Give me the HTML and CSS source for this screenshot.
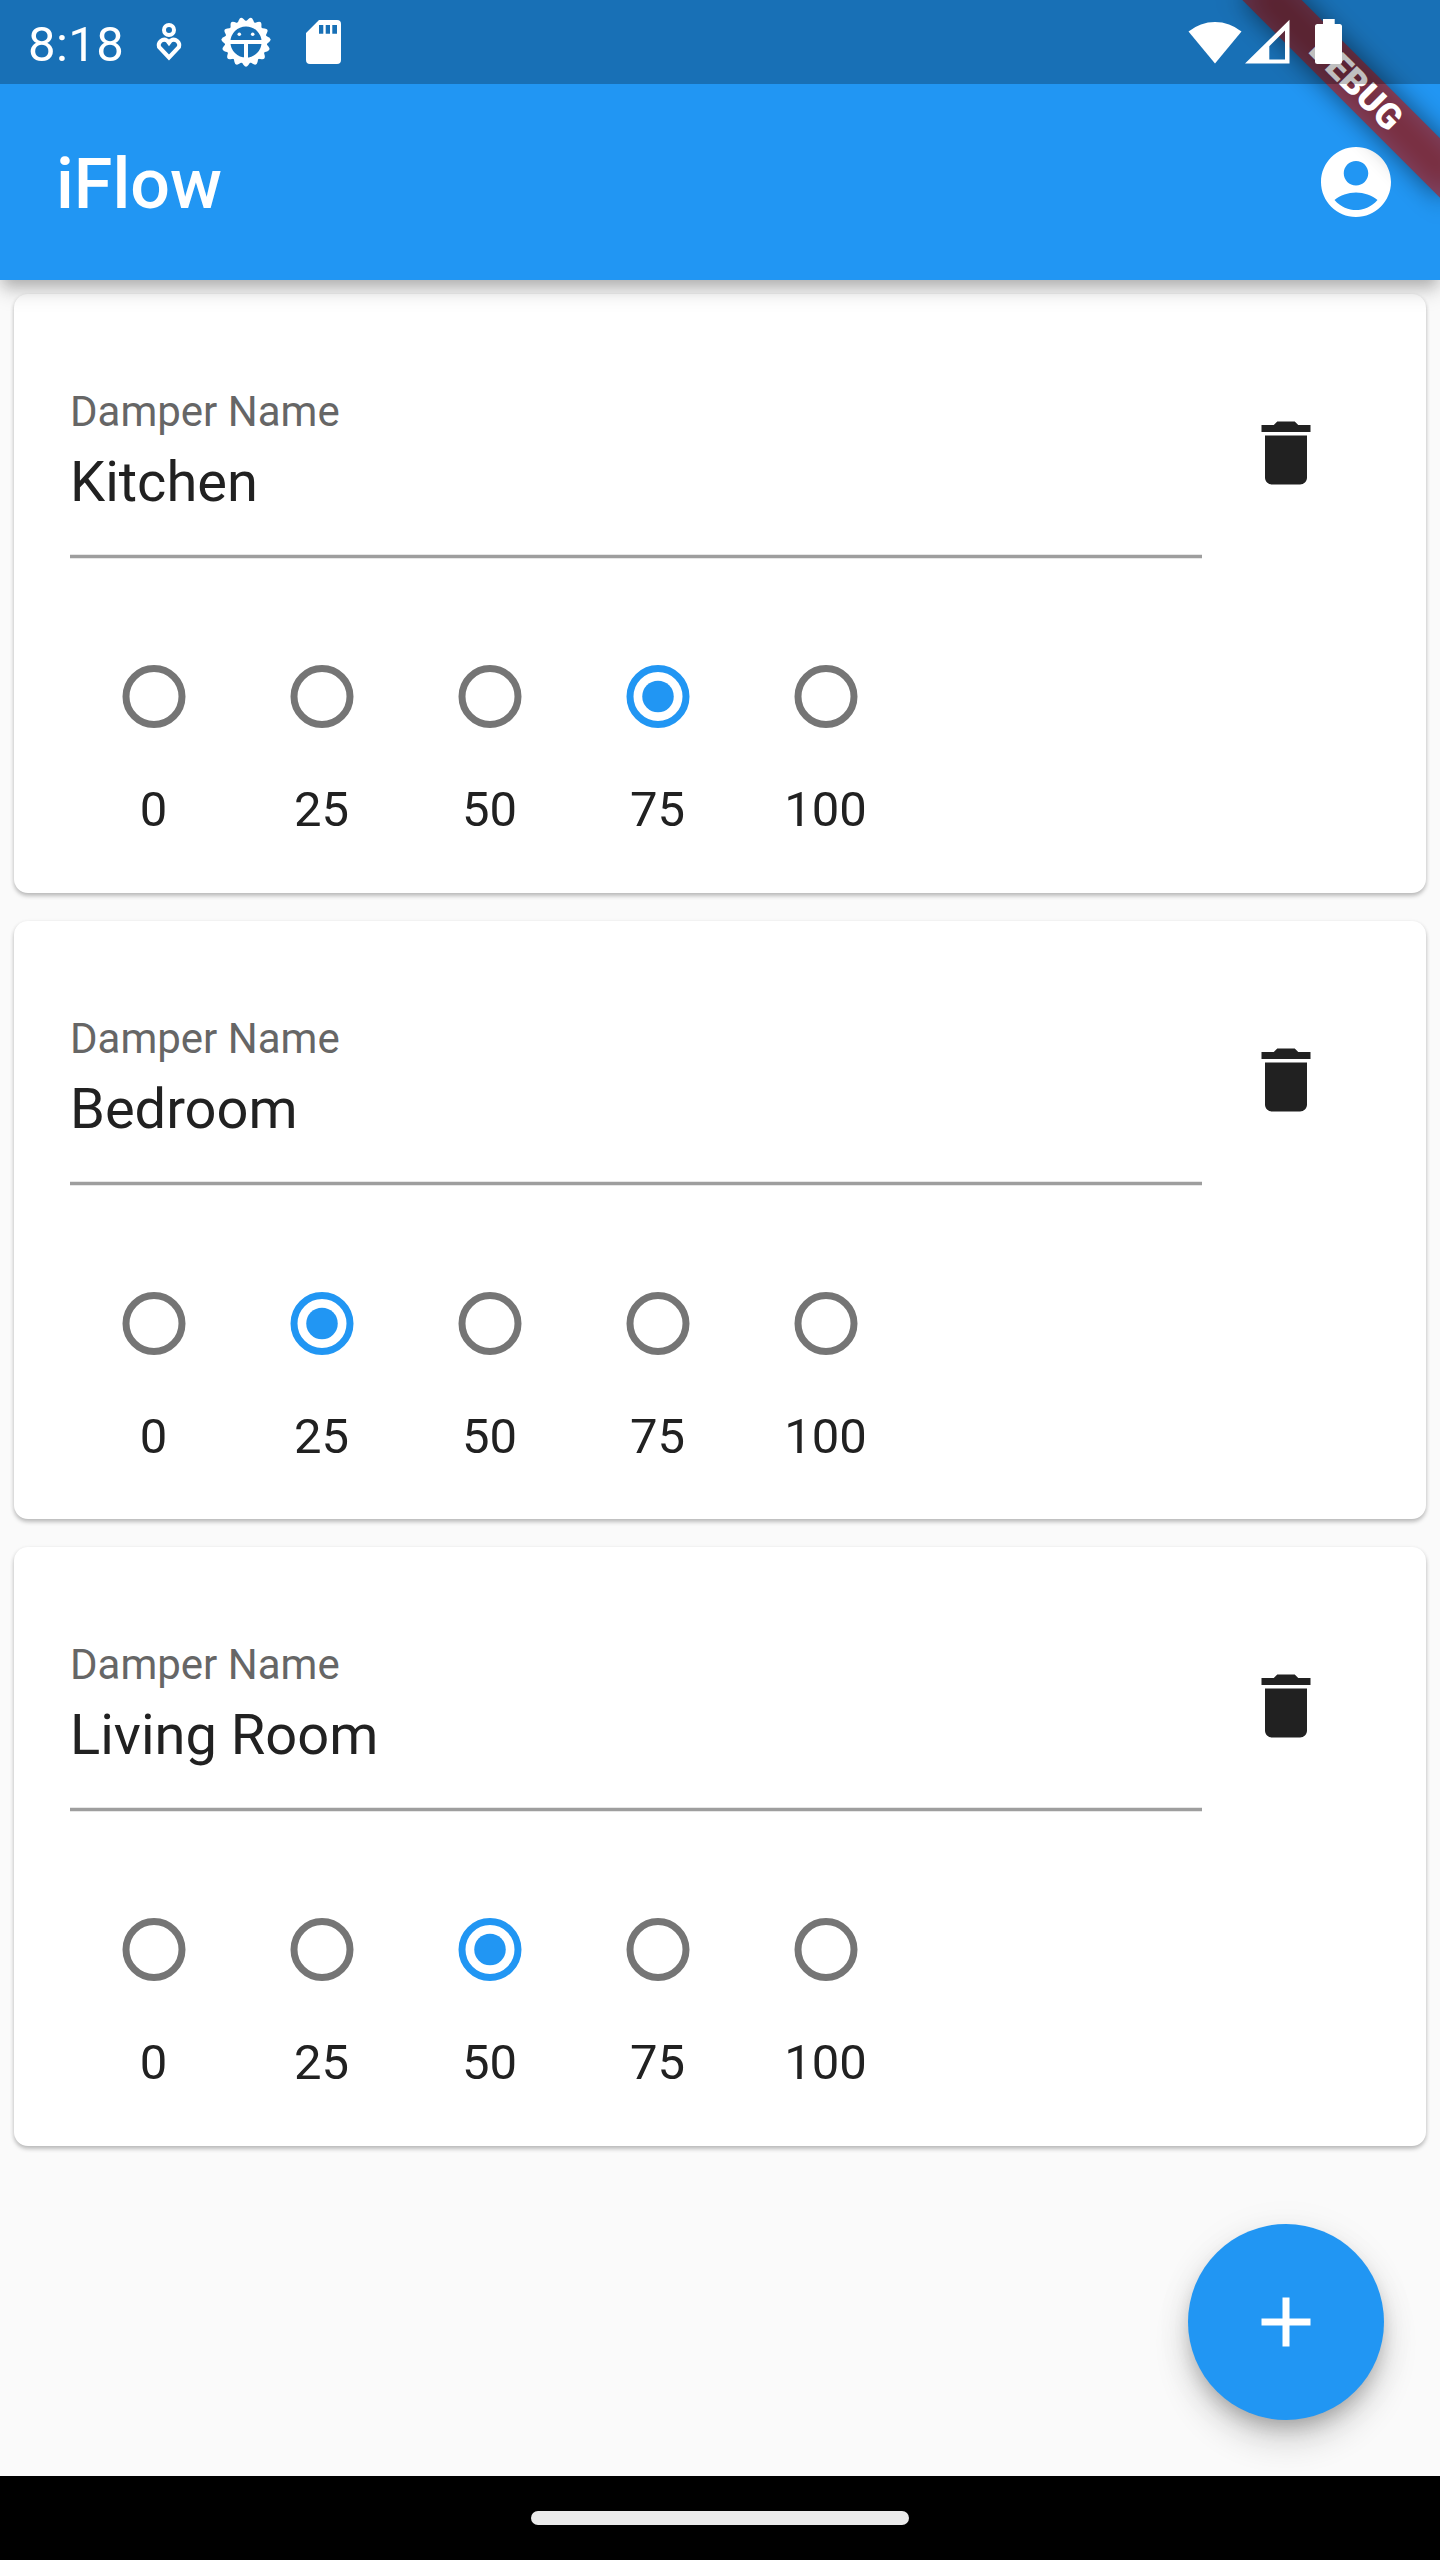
FILE: index.html
```html
<!DOCTYPE html>
<html lang="en">
<head>
<meta charset="utf-8">
<title>iFlow</title>
<link rel="stylesheet" href="styles.css">
</head>
<body>
<svg class="defs" width="0" height="0" aria-hidden="true">
  <defs>
    <symbol id="trash" viewBox="0 0 24 24"><path d="M6 19c0 1.1.9 2 2 2h8c1.1 0 2-.9 2-2V7H6v12zM19 4h-3.5l-1-1h-5l-1 1H5v2h14V4z"/></symbol>
    <symbol id="off" viewBox="0 0 64 63"><circle cx="32" cy="31.5" r="28" fill="none" stroke="#757575" stroke-width="7"/></symbol>
    <symbol id="on" viewBox="0 0 64 63"><circle cx="32" cy="31.5" r="28" fill="none" stroke="#2196f3" stroke-width="7"/><circle cx="32" cy="31.5" r="15.75" fill="#2196f3"/></symbol>
    <path id="tooth" d="M-4.8 -19.5 L-2.4 -23 Q0 -26.4 2.4 -23 L4.8 -19.5Z"/>
  </defs>
</svg>
<div class="screen">
  <header class="top">
    <div class="banner-shadow"></div>
    <div class="banner">DEBUG</div>
    <div class="status">
      <span class="time">8:18</span>
      <svg class="heart" width="28" height="40" viewBox="0 0 28 40" fill="none" stroke="#fff" stroke-width="4">
        <circle cx="14" cy="8" r="5"/>
        <path d="M14 35.5 L4 25 A5.6 5.6 0 0 1 12 18.4 L14 21 L16 18.4 A5.6 5.6 0 0 1 24 25 Z"/>
      </svg>
      <svg class="gear" width="50" height="50" viewBox="-25 -25 50 50" fill="#fff">
        <circle r="18.4" fill="none" stroke="#fff" stroke-width="5.6"/>
        <use href="#tooth" transform="rotate(12)"/><use href="#tooth" transform="rotate(36)"/>
        <use href="#tooth" transform="rotate(60)"/><use href="#tooth" transform="rotate(84)"/>
        <use href="#tooth" transform="rotate(108)"/><use href="#tooth" transform="rotate(132)"/>
        <use href="#tooth" transform="rotate(156)"/><use href="#tooth" transform="rotate(180)"/>
        <use href="#tooth" transform="rotate(204)"/><use href="#tooth" transform="rotate(228)"/>
        <use href="#tooth" transform="rotate(252)"/><use href="#tooth" transform="rotate(276)"/>
        <use href="#tooth" transform="rotate(300)"/><use href="#tooth" transform="rotate(324)"/>
        <use href="#tooth" transform="rotate(348)"/>
        <path d="M-17 -2H17V2H2V17H-2V2H-17Z"/>
        <circle cx="-6.7" cy="-7.7" r="1.8"/><circle cx="6.7" cy="-7.7" r="1.8"/>
      </svg>
      <svg class="sd" width="35" height="44" viewBox="0 0 35 44">
        <path fill="#fff" fill-rule="evenodd" d="M13 0H31A4 4 0 0 1 35 4V40A4 4 0 0 1 31 44H4A4 4 0 0 1 0 40V13ZM13 5V13.7H17.3V5ZM19.7 5V13.7H24V5ZM26.3 5V13.7H31V5Z"/>
      </svg>
      <svg class="wifi" width="54" height="45" viewBox="0 0 54 45"><path fill="#fff" d="M27 44.5 L0.5 12.5 A42 42 0 0 1 53.5 12.5Z"/></svg>
      <svg class="signal" width="45" height="45" viewBox="0 0 45 45"><path fill="#fff" fill-rule="evenodd" d="M0 44.5H44.5V.8ZM24.3 27.2V40.4H40V11.6Z"/></svg>
      <svg class="battery" width="27" height="45" viewBox="0 0 27 45"><path fill="#fff" d="M8 0H19.7V5H24.5A2.5 2.5 0 0 1 27 7.5V42.5A2.5 2.5 0 0 1 24.5 45H2.5A2.5 2.5 0 0 1 0 42.5V7.5A2.5 2.5 0 0 1 2.5 5H8Z"/></svg>
    </div>
    <div class="appbar">
      <h1>iFlow</h1>
      <svg width="84" height="84" viewBox="0 0 24 24" fill="#fff"><path d="M12 2C6.48 2 2 6.48 2 12s4.48 10 10 10 10-4.48 10-10S17.52 2 12 2zM12 6c1.93 0 3.5 1.57 3.5 3.5S13.93 13 12 13s-3.5-1.57-3.5-3.5S10.07 6 12 6zm0 14c-2.03 0-4.43-.82-6.14-2.88C7.55 15.8 9.68 15 12 15s4.45.8 6.14 2.12C16.43 19.18 14.03 20 12 20z"/></svg>
    </div>
  </header>
  <main class="list">
    <section class="card">
      <div class="head">
        <div class="field"><div class="label">Damper Name</div><div class="value">Kitchen</div></div>
        <svg class="trash" width="84" height="84"><use href="#trash"/></svg>
      </div>
      <div class="options">
        <div class="option"><svg width="64" height="63"><use href="#off"/></svg><span>0</span></div>
        <div class="option"><svg width="64" height="63"><use href="#off"/></svg><span>25</span></div>
        <div class="option"><svg width="64" height="63"><use href="#off"/></svg><span>50</span></div>
        <div class="option"><svg width="64" height="63"><use href="#on"/></svg><span>75</span></div>
        <div class="option"><svg width="64" height="63"><use href="#off"/></svg><span>100</span></div>
      </div>
    </section>
    <section class="card">
      <div class="head">
        <div class="field"><div class="label">Damper Name</div><div class="value">Bedroom</div></div>
        <svg class="trash" width="84" height="84"><use href="#trash"/></svg>
      </div>
      <div class="options">
        <div class="option"><svg width="64" height="63"><use href="#off"/></svg><span>0</span></div>
        <div class="option"><svg width="64" height="63"><use href="#on"/></svg><span>25</span></div>
        <div class="option"><svg width="64" height="63"><use href="#off"/></svg><span>50</span></div>
        <div class="option"><svg width="64" height="63"><use href="#off"/></svg><span>75</span></div>
        <div class="option"><svg width="64" height="63"><use href="#off"/></svg><span>100</span></div>
      </div>
    </section>
    <section class="card">
      <div class="head">
        <div class="field"><div class="label">Damper Name</div><div class="value">Living Room</div></div>
        <svg class="trash" width="84" height="84"><use href="#trash"/></svg>
      </div>
      <div class="options">
        <div class="option"><svg width="64" height="63"><use href="#off"/></svg><span>0</span></div>
        <div class="option"><svg width="64" height="63"><use href="#off"/></svg><span>25</span></div>
        <div class="option"><svg width="64" height="63"><use href="#on"/></svg><span>50</span></div>
        <div class="option"><svg width="64" height="63"><use href="#off"/></svg><span>75</span></div>
        <div class="option"><svg width="64" height="63"><use href="#off"/></svg><span>100</span></div>
      </div>
    </section>
    <div class="fab"><svg width="84" height="84" viewBox="0 0 24 24"><path fill="#fff" d="M19 13h-6v6h-2v-6H5v-2h6V5h2v6h6v2z"/></svg></div>
  </main>
  <footer class="nav"><div class="pill"></div></footer>
</div>
</body>
</html>
```
FILE: styles.css
```css
* { box-sizing: border-box; }
body { margin: 0; font-family: Roboto, sans-serif; color: #212121; }
.defs { position: absolute; }
.screen { position: relative; display: flex; flex-direction: column; width: 1440px; height: 2560px; overflow: hidden; background: #fafafa; }
.top {
  position: relative; z-index: 1; flex: none; height: 280px; background: #2196f3;
  box-shadow: 0 8px 14px -3px rgba(0,0,0,.2), 0 12px 20px rgba(0,0,0,.14);
}
.status { position: relative; z-index: 2; display: flex; align-items: flex-start; height: 84px; background: rgba(0,0,0,.25); color: #fff; }
.time { width: 126px; padding-left: 28px; font-size: 49px; line-height: 56px; margin-top: 17px; letter-spacing: .4px; white-space: nowrap; }
.heart { margin: 22px 0 0 29px; }
.gear { margin: 17px 0 0 38px; }
.sd { margin: 20px 0 0 35px; }
.wifi { margin: 19px 0 0 847px; }
.signal { margin: 19px 0 0 3px; }
.battery { margin: 19px 0 0 25px; }
.appbar { display: flex; align-items: center; justify-content: space-between; height: 196px; padding: 0 42px 0 56px; }
.appbar h1 { margin: 4px 0 0; font-size: 70px; line-height: 84px; font-weight: 500; color: #fff; }
.banner, .banner-shadow { position: absolute; z-index: 1; left: 1216px; top: 63px; width: 280px; height: 42px; transform: rotate(45deg); }
.banner-shadow { background: rgba(0,0,0,.5); filter: blur(12.6px); }
.banner { background: rgba(183,28,28,.627); color: #fff; font-size: 35.7px; line-height: 42px; font-weight: 900; text-align: center; }
.list { position: relative; flex: 1; display: flex; flex-direction: column; gap: 28px; padding: 14px; }
.card {
  flex: none; height: 598.5px; padding: 84px 56px 0; border-radius: 14px; background: #fff;
  box-shadow: 0 3px 4px rgba(0,0,0,.22), 0 1px 4px rgba(0,0,0,.08);
}
.head { display: flex; gap: 42px; height: 181px; }
.field {
  width: 1132px; height: 181px; padding-top: 9px;
  background: linear-gradient(#e7e7e7 1px, #9e9e9e 1px, #9e9e9e 4px, #e7e7e7 4px) bottom / 100% 5px no-repeat;
}
.label { font-size: 42px; line-height: 49px; color: #666; }
.value { margin-top: 13px; font-size: 56px; line-height: 66px; }
.trash { margin-top: 33px; fill: #212121; }
.options { display: flex; padding-top: 106px; }
.option { display: flex; flex-direction: column; align-items: center; width: 168px; }
.option span { margin: 54px 1px 0 0; font-size: 49px; line-height: 56px; }
.fab {
  position: absolute; right: 56px; bottom: 56px; display: flex; align-items: center; justify-content: center;
  width: 196px; height: 196px; border-radius: 50%; background: #2196f3;
  box-shadow: 0 10.5px 17.5px -3.5px rgba(0,0,0,.2), 0 21px 35px rgba(0,0,0,.16), 0 3.5px 40px rgba(0,0,0,.05);
}
.nav { display: flex; align-items: center; justify-content: center; flex: none; height: 84px; background: #000; }
.pill { width: 378px; height: 14px; border-radius: 7px; background: #ebebeb; }
```
